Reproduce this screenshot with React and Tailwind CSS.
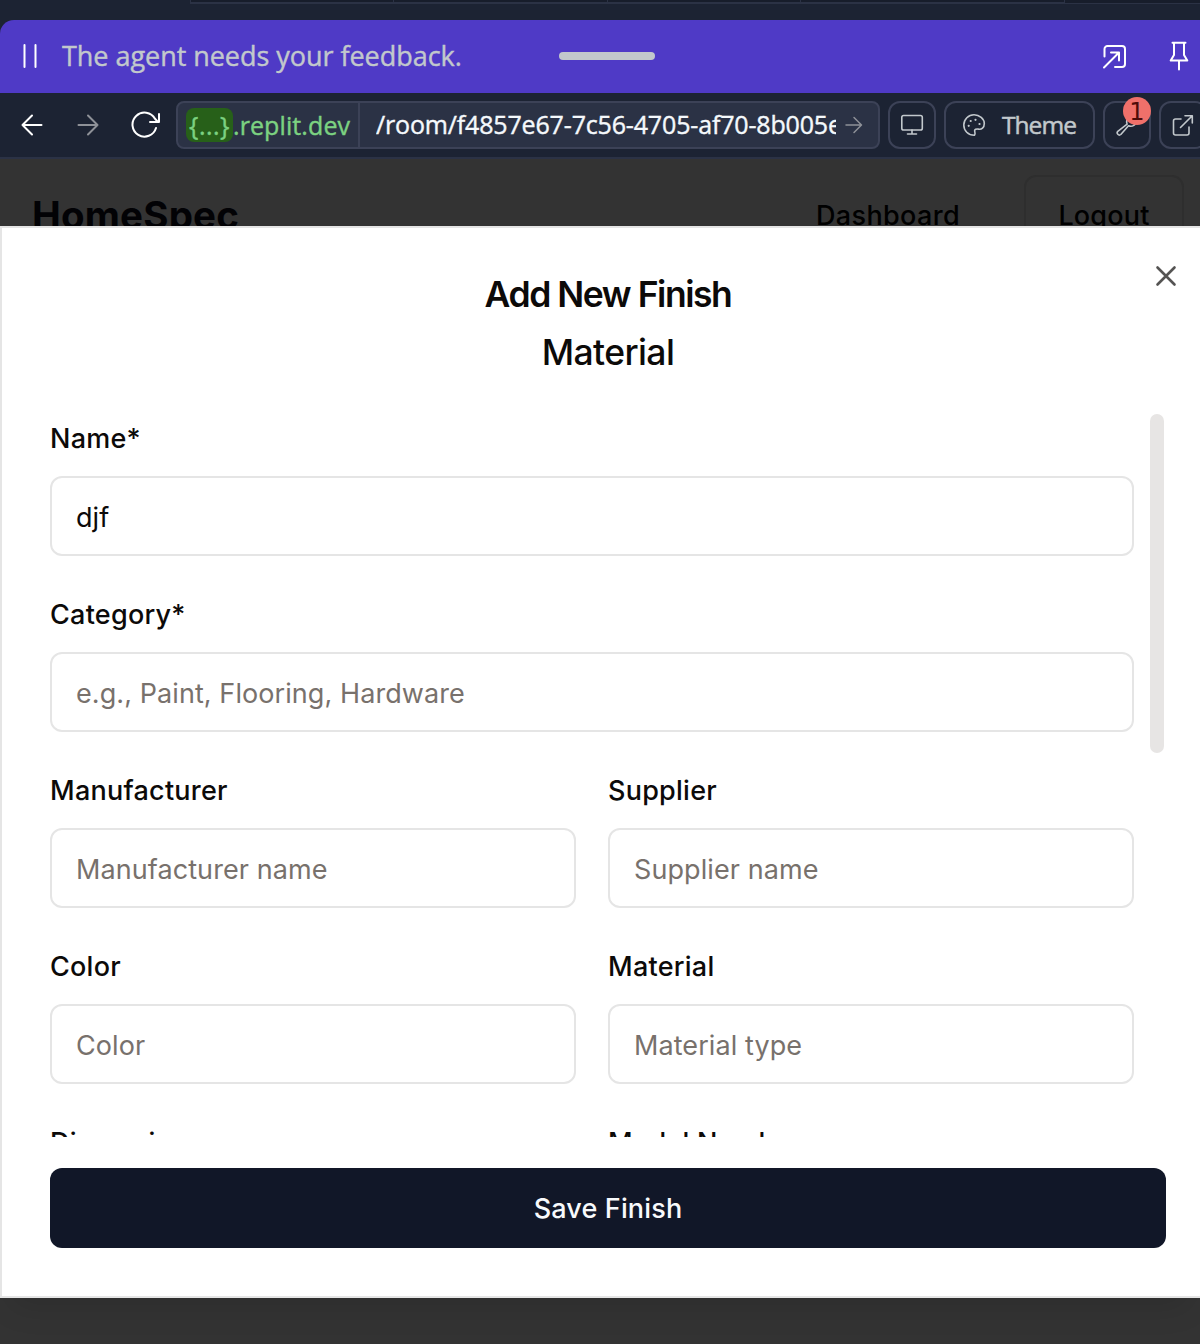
import React from "react";

function Icon({ w, h, sw = 2, className = "", children }) {
  return (
    <svg
      width={w}
      height={h}
      viewBox={`0 0 ${w} ${h}`}
      fill="none"
      stroke="currentColor"
      strokeWidth={sw}
      strokeLinecap="round"
      strokeLinejoin="round"
      className={`block shrink-0 ${className}`}
    >
      {children}
    </svg>
  );
}

function TabStrip() {
  return (
    <div className="flex h-5 items-start bg-[#1c2333]">
      <div className="flex h-1 w-[875px] ml-[190px] shrink-0 border-b-2 border-l border-[#2b3245] bg-[#171d2b]">
        <div className="w-[203px] border-r border-[#2b3245]" />
        <div className="w-[214px] border-r border-[#2b3245]" />
        <div className="w-[193px] border-r border-[#2b3245]" />
        <div className="flex-1 border-r border-[#2b3245]" />
      </div>
      <div className="h-1 flex-1 border-b border-[#2b3245] bg-[#171d2b]" />
    </div>
  );
}

function Banner() {
  return (
    <div className="bg-[#1c2333]">
      <div className="flex h-[73px] items-center rounded-tl-[14px] bg-[#4f3ac6] pb-[2px] text-white">
        <Icon w={16} h={24} className="ml-[22px]">
          <path d="M2.5 1v22M13.5 1v22" />
        </Icon>
        <div className="ml-[24px] w-[497px] whitespace-nowrap font-['Open_Sans',sans-serif] text-[27px] leading-[36px] tracking-[-0.04px] text-[#c2c8cc] [-webkit-text-stroke:0.4px_#c2c8cc]">
          The agent needs your feedback.
        </div>
        <div className="h-2 w-24 shrink-0 rounded-full bg-[#c2c8cc]" />
        <Icon w={26} h={26} className="ml-[447px]">
          <path d="M2.500 13.500V6a3 3 0 0 1 3-3H20a3 3 0 0 1 3 3v15a3 3 0 0 1-3 3h-7" />
          <path d="M2 24.500 17 9.500M9 9.500h8v8" />
        </Icon>
        <Icon w={20} h={30} className="ml-[41px]">
          <path d="M3.500 1.700h13M5 2v12l-3.300 5.600h16.600L15 14V2M10 20v8.600" />
        </Icon>
      </div>
    </div>
  );
}

function ToolButton({ className = "", children }) {
  return (
    <div
      className={`flex h-12 shrink-0 items-center rounded-[12px] border-2 border-[#3c4257] text-[#c2c8cc] ${className}`}
    >
      {children}
    </div>
  );
}

function BrowserBar() {
  return (
    <div className="flex h-[66px] items-center overflow-hidden border-b-2 border-[#2b3245] bg-[#1c2333] font-['Open_Sans',sans-serif]">
      <Icon w={24} h={24} className="ml-5 text-white">
        <path d="M21.500 12H2.500M12 2.500 2.500 12l9.500 9.500" />
      </Icon>
      <Icon w={24} h={24} className="ml-8 text-[#8e9198]">
        <path d="M2.500 12h19M12 2.500l9.500 9.500-9.500 9.500" />
      </Icon>
      <Icon w={32} h={28} className="ml-[30px] text-white">
        <path d="M26 17A12 12 0 1 1 25 7.800L28 11" />
        <path d="M29 3v8h-9" />
      </Icon>
      <div className="ml-[14px] flex h-12 w-[704px] shrink-0 overflow-hidden rounded-[8px] border-2 border-[#3c4257] bg-[#2b3245]">
        <div className="flex w-[182px] shrink-0 items-center border-r-2 border-[#3c4257] pl-2 text-[25px] leading-[34px] text-[#7cd281] [-webkit-text-stroke:0.4px_#7cd281]">
          <span className="flex h-[34px] w-[47px] shrink-0 items-center justify-center rounded-[8px] bg-[#276019]">
            <span className="tracking-[0.5px]">{"{...}"}</span>
          </span>
          <span className="tracking-[0.1px]">.replit.dev</span>
        </div>
        <div className="ml-4 flex w-[460px] items-center overflow-hidden whitespace-nowrap text-[25px] tracking-[-0.16px] text-[#f5f9fc] [-webkit-text-stroke:0.4px_#f5f9fc]">
          /room/f4857e67-7c56-4705-af70-8b005e
        </div>
        <Icon w={18} h={18} sw={1.500} className="ml-[9px] self-center text-[#8e9198]">
          <path d="M1 9h15M9 1.500 16.500 9 9 16.500" />
        </Icon>
      </div>
      <ToolButton className="ml-2 w-12 justify-center">
        <Icon w={24} h={24} sw={1.600}>
          <rect x="1.800" y="2.500" width="20.500" height="14.500" rx="1.800" />
          <path d="M12 17v4M7.500 21h9" />
        </Icon>
      </ToolButton>
      <ToolButton className="ml-2 w-[151px] pl-[16px]">
        <Icon w={24} h={24} sw={1.600}>
          <path d="M12.500 22.300C6 22.300 1.800 17.500 1.800 12S6.500 1.700 12 1.700 22.300 6 22.300 10.500c0 4.500-3 6-5.300 5.700-2-.2-3.500-.5-4.200.7-.8 1.600 1.300 3.500-.3 5.400z" />
          <path d="M6.700 12.800h.01M8.700 8h.01M13.500 6.800h.01M17.500 11h.01" strokeWidth="2.200" />
        </Icon>
        <span className="ml-[16px] text-[24.5px] leading-[34px] tracking-[-0.95px] [-webkit-text-stroke:0.5px_#c2c8cc]">
          Theme
        </span>
      </ToolButton>
      <ToolButton className="relative ml-2 w-12 justify-center">
        <Icon w={24} h={24} sw={1.600}>
          <path d="M14.500 4.500a5.500 5.500 0 0 0-2.400 6.700L2.800 18.300a2.200 2.200 0 0 0 3 3.200l7.700-8.700a5.500 5.500 0 0 0 7.700-5.300l-3.200 2-3-3z" />
        </Icon>
        <span className="absolute -top-[6px] left-[18px] flex h-7 w-7 items-center justify-center rounded-full bg-[#f0706a] pt-[2px] text-[24px] leading-none text-[#4f0b08] font-['DejaVu_Sans',sans-serif]">
          1
        </span>
      </ToolButton>
      <ToolButton className="ml-2 w-12 justify-center">
        <Icon w={24} h={24} sw={1.600}>
          <path d="M10 6H4.500a2 2 0 0 0-2 2V20a2 2 0 0 0 2 2h11.500a2 2 0 0 0 2-2v-6" />
          <path d="M9.500 14.500 21 3M14 2.700H21.300V10" />
        </Icon>
      </ToolButton>
    </div>
  );
}

function PageHeader() {
  return (
    <div className="flex h-[67px] items-start overflow-hidden bg-[#333333] text-[#020205]">
      <div className="ml-8 mt-[36px] w-[784px] text-[38.5px] font-bold leading-[40px] tracking-[0.2px]">
        HomeSpec
      </div>
      <div className="mt-[37px] w-[208px] text-[27px] font-medium leading-[40px] tracking-[0.35px] text-black">
        Dashboard
      </div>
      <div className="mt-4 flex h-20 w-[160px] shrink-0 items-center justify-center rounded-[12px] border-2 border-[#2e2e2e] pt-[2px] text-[27px] font-medium tracking-[0.2px] text-black">
        Logout
      </div>
    </div>
  );
}

function Label({ children }) {
  return (
    <div className="h-7 whitespace-nowrap text-[27px] font-medium leading-[30px] tracking-[0.25px] text-[#0c0a09]">
      {children}
    </div>
  );
}

function Field({ label, value, placeholder }) {
  return (
    <div className="flex min-w-0 flex-1 flex-col gap-6">
      <Label>{label}</Label>
      <div className="flex h-20 items-center rounded-[12px] border-2 border-[#e5e5e5] px-6 pt-[5px] text-[27px] tracking-[0.08px]">
        {value ? (
          <span className="text-[#0c0a09]">{value}</span>
        ) : (
          <span className="text-[#78716c]">{placeholder}</span>
        )}
      </div>
    </div>
  );
}

function Dialog() {
  return (
    <div className="relative flex h-[1072px] shrink-0 flex-col border-2 border-r-0 border-[#e5e5e5] bg-white pl-12 pr-[34px] shadow-[0_20px_30px_-12px_rgba(0,0,0,0.12)]">
      <Icon w={22} h={22} sw={2.600} className="absolute right-[23px] top-[37px] text-[#555453]">
        <path d="M2.500 2.500l17 17M19.500 2.500l-17 17" />
      </Icon>
      <div className="mt-[38px] text-center text-[35.5px] leading-[58px] text-[#0c0a09]">
        <div className="font-semibold tracking-[-1.45px]">Add New Finish</div>
        <div className="font-medium tracking-[-0.6px]">Material</div>
      </div>
      <div className="mt-8 flex h-[723px] justify-between">
        <div className="flex w-[1084px] flex-col gap-11 overflow-hidden pt-[10px]">
          <Field label="Name*" value="djf" />
          <Field label="Category*" placeholder="e.g., Paint, Flooring, Hardware" />
          <div className="flex gap-8">
            <Field label="Manufacturer" placeholder="Manufacturer name" />
            <Field label="Supplier" placeholder="Supplier name" />
          </div>
          <div className="flex gap-8">
            <Field label="Color" placeholder="Color" />
            <Field label="Material" placeholder="Material type" />
          </div>
          <div className="-mt-[0.5px] flex gap-8">
            <Field label="Dimensions" />
            <Field label="Model Number" />
          </div>
        </div>
        <div className="mr-[2px] h-[339px] w-[14px] rounded-full bg-[#e7e5e4]" />
      </div>
      <div className="mt-[31px] flex h-20 shrink-0 items-center justify-center rounded-[12px] bg-[#111728] pt-[2px] text-[27px] font-medium tracking-[0.15px] text-[#f8fafc]">
        Save Finish
      </div>
    </div>
  );
}

export default function App() {
  return (
    <div className="flex h-[1344px] w-[1200px] flex-col overflow-hidden bg-[#333333] font-['Inter',sans-serif]">
      <TabStrip />
      <Banner />
      <BrowserBar />
      <PageHeader />
      <Dialog />
    </div>
  );
}
